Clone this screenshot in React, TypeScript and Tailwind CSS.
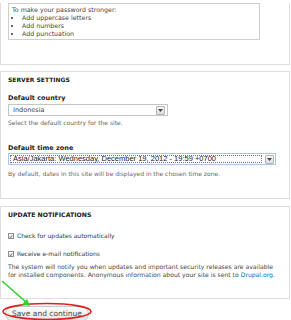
import type { ReactNode } from 'react';

const label = 'block text-[6.5px] leading-[8px] font-bold text-[#222]';
const help = 'text-[6px] leading-[8px] text-[#666]';

function DropArrow() {
  return (
    <span className="flex h-[9px] w-[9px] items-center justify-center rounded-[1px] border border-[#b5b5b5] bg-gradient-to-b from-[#f7f7f7] to-[#dcdcdc]">
      <svg width="5" height="3" viewBox="0 0 5 3" aria-hidden="true">
        <path d="M0 0h5L2.5 3Z" fill="#444" />
      </svg>
    </span>
  );
}

function Checkbox({ children }: { children: ReactNode }) {
  return (
    <label className="flex h-[8px] items-center gap-[3px] text-[6px] leading-[8px] text-[#333]">
      <span className="flex h-[6px] w-[6px] items-center justify-center border border-[#8f8f8f] bg-gradient-to-b from-white to-[#e4e4e4]">
        <svg width="5" height="5" viewBox="0 0 10 10" aria-hidden="true">
          <path d="M2 5.5l2 2.5 4-6" fill="none" stroke="#2b5aa8" strokeWidth="1.8" />
        </svg>
      </span>
      {children}
    </label>
  );
}

export default function App() {
  return (
    <main className="relative h-[320px] w-[291px] overflow-hidden bg-white font-['DejaVu_Sans',sans-serif]">
      {/* password tips, fieldset continues above the crop */}
      <section className="h-[62px] w-[290px] border-x border-b border-[#dedede]">
        <div className="ml-[7px] mt-[3px] h-[37px] w-[252px] border border-[#cfcfcf] px-[3px] pt-[2px] text-[6.3px] leading-[8px] text-[#444]">
          <p>To make your password stronger:</p>
          <ul className="list-disc pl-[10px] marker:text-[#333]">
            <li>Add uppercase letters</li>
            <li>Add numbers</li>
            <li>Add punctuation</li>
          </ul>
        </div>
      </section>

      <section className="mt-[6px] h-[128px] w-[290px] border border-[#dedede] px-[7px] pt-[4px]">
        <h2 className="text-[6px] leading-[8px] font-bold uppercase text-[#222]">Server settings</h2>

        <span className={`${label} mt-[10px]`}>Default country</span>
        <div className="mt-[2px] flex h-[12px] w-[160px] items-center justify-between border border-[#c4c4c4] bg-white pl-[4px] pr-[2px]">
          <span className="text-[6.5px] leading-[8px] text-[#444]">Indonesia</span>
          <DropArrow />
        </div>
        <p className={`${help} mt-[3px]`}>Select the default country for the site.</p>

        <span className={`${label} mt-[17px]`}>Default time zone</span>
        <div className="mt-[1px] flex h-[12px] w-[268px] items-center justify-between border border-[#a9c6e4] bg-white p-[1px]">
          <span className="flex h-full flex-1 items-center border border-dotted border-[#777] pl-[2px] font-['Liberation_Sans',sans-serif] text-[7.5px] leading-[8px] text-[#222]">
            Asia/Jakarta: Wednesday, December 19, 2012 - 19:59 +0700
          </span>
          <span className="ml-[3px]">
            <DropArrow />
          </span>
        </div>
        <p className={`${help} mt-[5px]`}>By default, dates in this site will be displayed in the chosen time zone.</p>
      </section>

      <section className="mt-[7px] h-[93px] w-[290px] border border-[#dedede] px-[7px] pt-[4px]">
        <h2 className="text-[6.2px] leading-[8px] font-bold uppercase text-[#222]">Update notifications</h2>
        <div className="mt-[13px]">
          <Checkbox>Check for updates automatically</Checkbox>
        </div>
        <div className="mt-[10px]">
          <Checkbox>Receive e-mail notifications</Checkbox>
        </div>
        <p className="mt-[5px] whitespace-nowrap text-[6.1px] leading-[8px] text-[#444]">
          The system will notify you when updates and important security releases are available
          <br />
          for installed components. Anonymous information about your site is sent to{' '}
          <a href="#" className="text-[#0074bd]">Drupal.org</a>.
        </p>
      </section>

      <div className="mt-[7px] flex pl-[5px]">
        <button
          type="button"
          className="h-[16px] rounded-[8px] border border-[#c8c8c8] bg-gradient-to-b from-[#fdfdfd] to-[#e3e3e3] px-[6px] text-[7.5px] leading-[14px] text-[#4a4a4a]"
        >
          Save and continue
        </button>
      </div>

      {/* annotation overlay */}
      <svg className="pointer-events-none absolute left-0 top-0" width="291" height="320" viewBox="0 0 291 320" aria-hidden="true">
        <ellipse cx="47" cy="311.5" rx="44" ry="8" fill="none" stroke="#e21d1d" strokeWidth="1.6" />
        <path d="M2 281L26 302" stroke="#2bd32b" strokeWidth="1.6" fill="none" />
        <path d="M30 306l-8-1.5 5-5.5Z" fill="#2bd32b" />
      </svg>
    </main>
  );
}
